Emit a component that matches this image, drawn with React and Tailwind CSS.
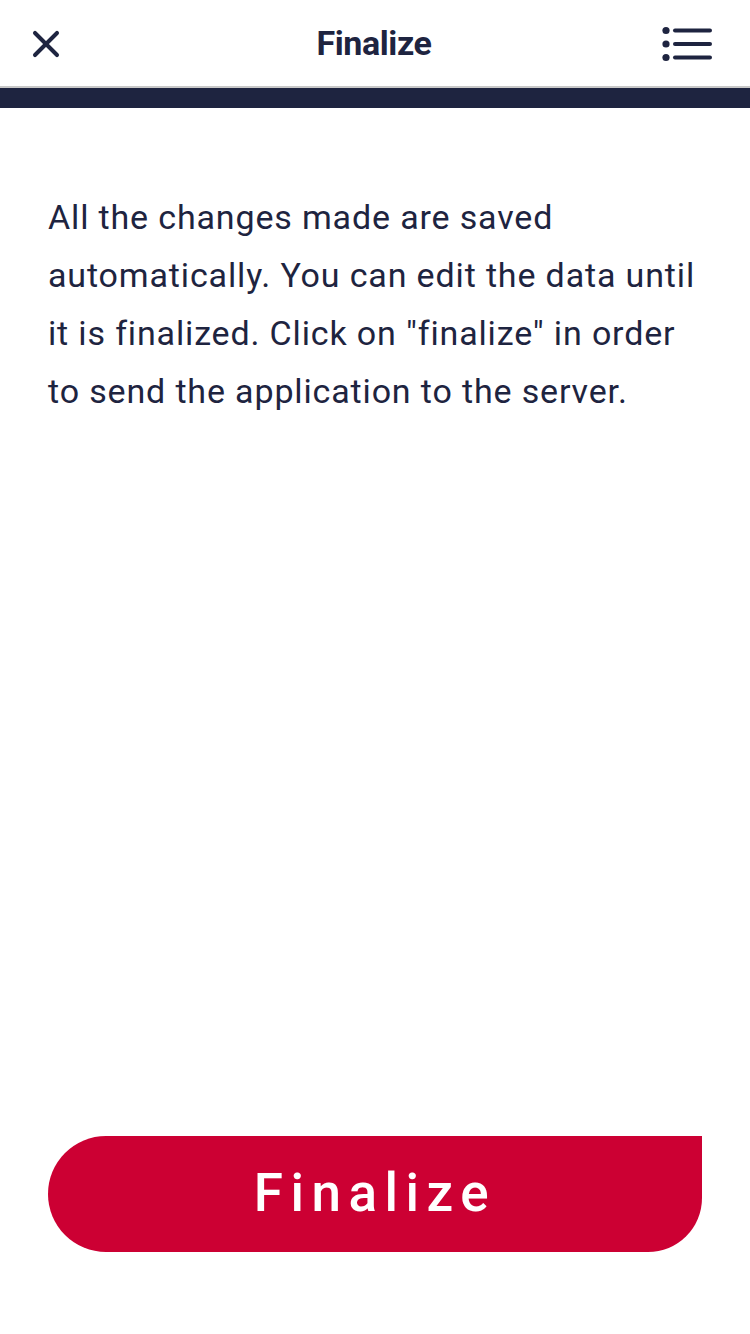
import { X } from 'lucide-react';

const MenuIcon = () => (
  <svg width="50" height="36" viewBox="0 0 50 36" fill="none">
    <circle cx="4" cy="4.5" r="3.6" fill="#1e2440" />
    <circle cx="4" cy="18" r="3.6" fill="#1e2440" />
    <circle cx="4" cy="31.5" r="3.6" fill="#1e2440" />
    <line x1="13" y1="4.5" x2="48" y2="4.5" stroke="#1e2440" strokeWidth="4" strokeLinecap="round" />
    <line x1="13" y1="18" x2="48" y2="18" stroke="#1e2440" strokeWidth="4" strokeLinecap="round" />
    <line x1="13" y1="31.5" x2="48" y2="31.5" stroke="#1e2440" strokeWidth="4" strokeLinecap="round" />
  </svg>
);

const App = () => {
  return (
    <div className="w-[750px] h-[1334px] bg-white flex flex-col font-['Roboto',sans-serif] text-[#1e2440]">
      {/* header */}
      <div className="h-[88px] flex items-center justify-between pl-[24px] pr-[38px] pt-[1px] border-b-2 border-[#c8c8c8]">
        <X size={44} strokeWidth={2.2} className="text-[#1e2440]" />
        <h1 className="text-[34px] font-bold tracking-[-0.4px] pl-[18px]">Finalize</h1>
        <MenuIcon />
      </div>
      <div className="h-[20px] bg-[#1e2440]" />

      <div className="flex-1 flex flex-col px-[48px] pt-[80px] pb-[82px]">
        <p className="text-[34px] leading-[58px] tracking-[0.85px]">
          All the changes made are saved automatically. You can edit the data until it is finalized. Click on "finalize" in order to send the application to the server.
        </p>

        <div className="flex-1" />

        <button className="h-[116px] w-full bg-[#cc0033] text-white text-[53px] font-medium tracking-[7.5px] rounded-l-[58px] rounded-br-[54px]">
          Finalize
        </button>
      </div>
    </div>
  );
};

export default App;
